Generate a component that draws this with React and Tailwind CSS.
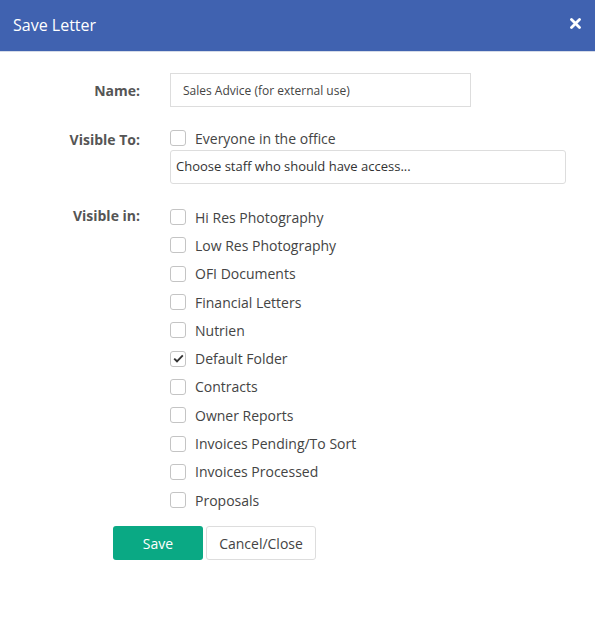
import React, { useState } from "react";

const folders = [
  "Hi Res Photography",
  "Low Res Photography",
  "OFI Documents",
  "Financial Letters",
  "Nutrien",
  "Default Folder",
  "Contracts",
  "Owner Reports",
  "Invoices Pending/To Sort",
  "Invoices Processed",
  "Proposals",
];

const Check = ({ checked, onClick }) => (
  <button
    type="button"
    onClick={onClick}
    className="w-4 h-4 shrink-0 rounded-[3px] border border-[#c4c4c4] bg-white flex items-center justify-center"
  >
    {checked && (
      <svg width="11" height="9" viewBox="0 0 11 9">
        <path d="M1.2 4.6 L4 7.3 L9.8 1.4" fill="none" stroke="#333" strokeWidth="1.9" />
      </svg>
    )}
  </button>
);

const App = () => {
  const [name, setName] = useState("Sales Advice (for external use)");
  const [everyone, setEveryone] = useState(false);
  const [picked, setPicked] = useState({ "Default Folder": true });

  const toggle = (f) => setPicked({ ...picked, [f]: !picked[f] });

  return (
    <div className="w-[595px] h-[618px] bg-white font-['Open_Sans',sans-serif] text-[#555]">
      {/* ── HEADER ── */}
      <div className="h-[52px] bg-[#4062b0] border-b border-[#d5dbe8] flex items-center justify-between pl-[13px] pr-[14px]">
        <h1 className="text-[16px] text-white pb-[2px]">Save Letter</h1>
        <svg width="11" height="11" viewBox="0 0 11 11" className="mb-[4px]">
          <path d="M1.5 1.5 L9.5 9.5 M9.5 1.5 L1.5 9.5" stroke="#fff" strokeWidth="2.8" strokeLinecap="round" />
        </svg>
      </div>

      {/* ── FORM ── */}
      <div className="pt-[21px] flex flex-col">
        <div className="flex items-center">
          <label className="w-[140px] text-right text-[14px] font-bold">Name:</label>
          <input
            value={name}
            onChange={(e) => setName(e.target.value)}
            className="ml-[30px] w-[301px] h-[34px] border border-[#ddd] px-[12px] text-[12px] text-[#444] outline-none"
          />
        </div>

        <div className="flex mt-[21px]">
          <label className="w-[140px] text-right text-[14px] font-bold pt-[1px]">Visible To:</label>
          <div className="ml-[30px] flex flex-col">
            <div className="flex items-center gap-[9px] h-[20px]">
              <Check checked={everyone} onClick={() => setEveryone(!everyone)} />
              <span className="text-[14px] text-[#444]">Everyone in the office</span>
            </div>
            <div className="mt-[2px] w-[396px] h-[34px] border border-[#ddd] rounded-[3px] px-[5px] flex items-center text-[13px] text-[#333]">
              Choose staff who should have access...
            </div>
          </div>
        </div>

        <div className="flex mt-[20px]">
          <label className="w-[140px] text-right text-[14px] font-bold pt-[1px]">Visible in:</label>
          <div className="ml-[30px] -mt-[1px] flex flex-col">
            {folders.map((f) => (
              <div key={f} className="flex items-center gap-[9px] h-[28.3px]">
                <Check checked={!!picked[f]} onClick={() => toggle(f)} />
                <span className="text-[14px] text-[#444]">{f}</span>
              </div>
            ))}
          </div>
        </div>

        <div className="flex gap-[3px] ml-[113px] mt-[12px]">
          <button className="w-[90px] h-[34px] rounded-[3px] bg-[#0aa984] text-white text-[14px]">Save</button>
          <button className="w-[110px] h-[34px] rounded-[3px] border border-[#ddd] bg-white text-[14px] text-[#444]">
            Cancel/Close
          </button>
        </div>
      </div>
    </div>
  );
};

export default App;
